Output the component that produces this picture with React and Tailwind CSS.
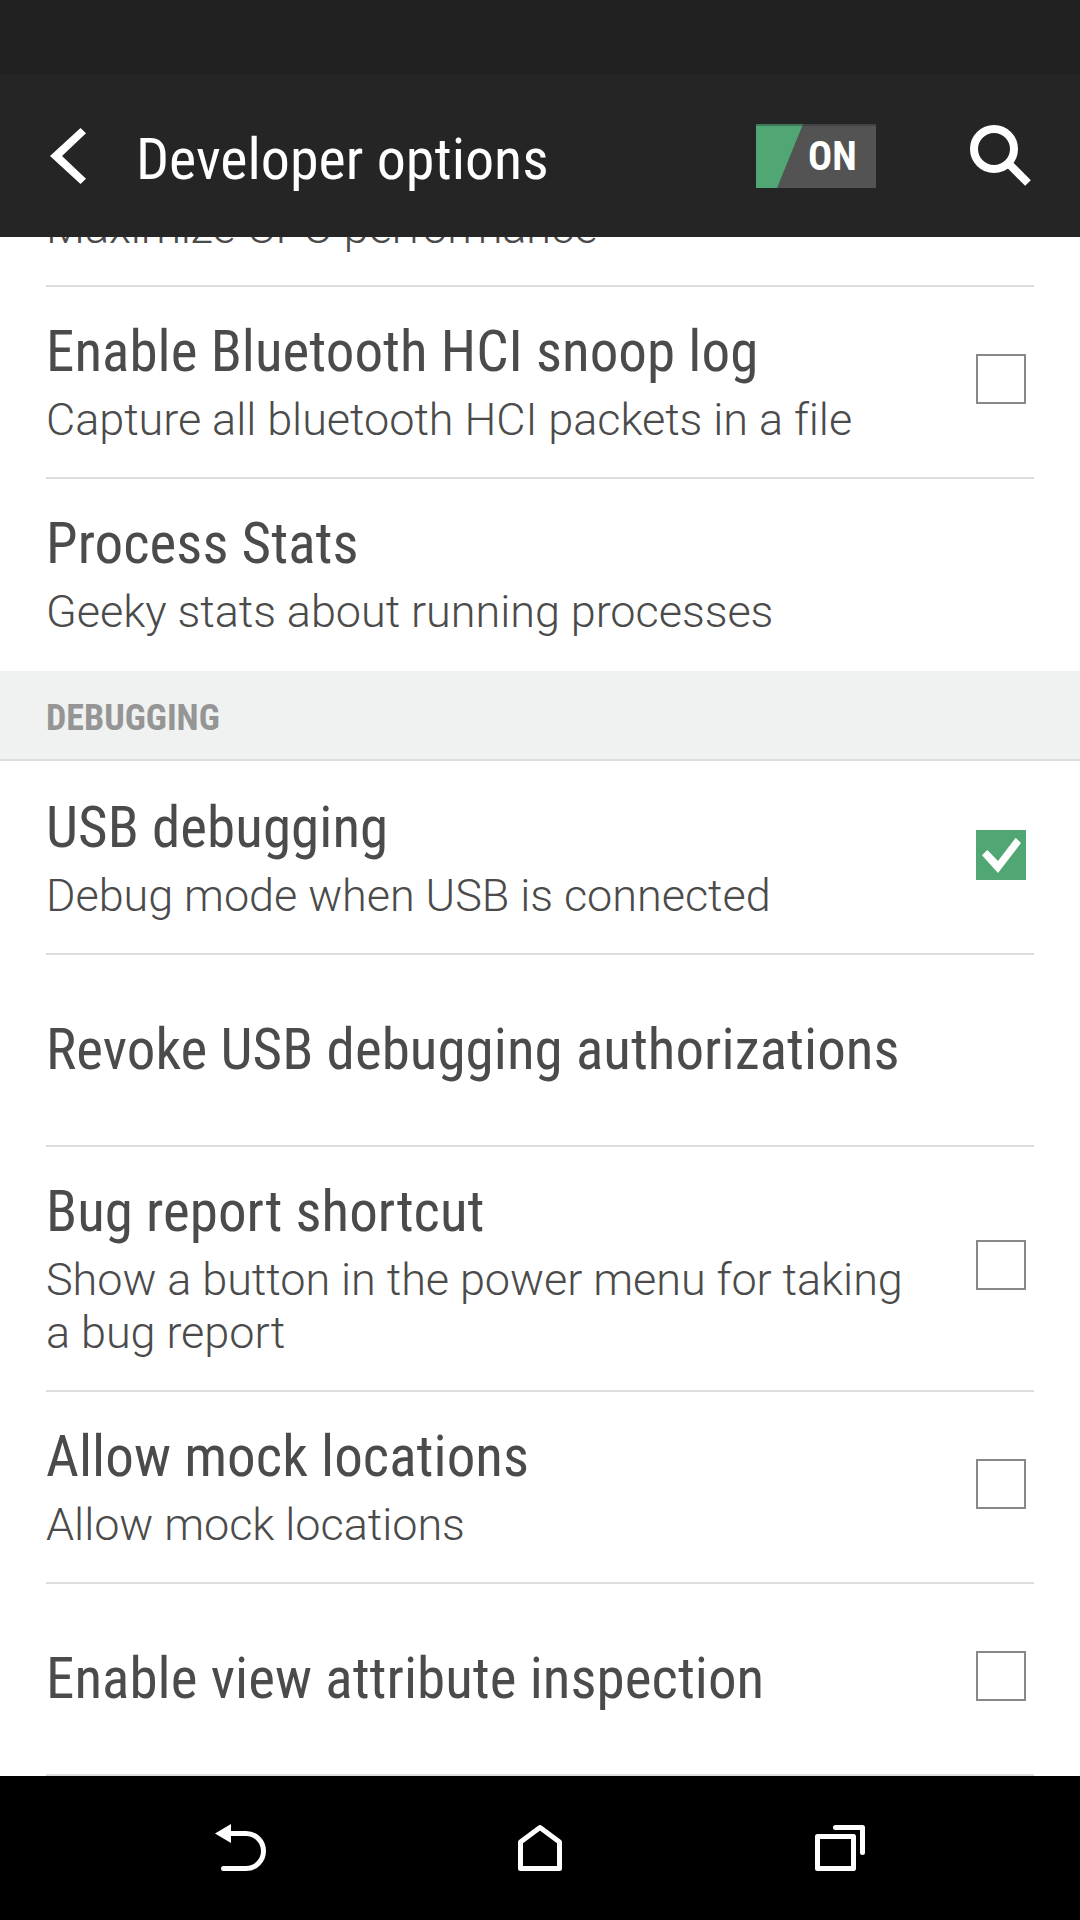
const condensed = "font-['Roboto',sans-serif] font-stretch-condensed";

function Checkbox({ checked }) {
  if (checked) {
    return (
      <svg className="mb-[7px] size-[50px] shrink-0 bg-[#50a773]" viewBox="0 0 50 50">
        <path d="M6 25.3 11.3 20 22 31 39.7 7.7 45 13 22 43Z" fill="#fff" />
      </svg>
    );
  }
  return <div className="mb-[7px] size-[50px] shrink-0 border-2 border-[#888888]" />;
}

function Row({ title, summary, checked, tall = false, divider = true }) {
  return (
    <div className="shrink-0 px-[46px]">
      <div
        className={`flex items-center justify-between border-b-2 pr-2 ${
          divider ? "border-[#dddddd]" : "border-transparent"
        } ${tall ? "h-[245px]" : "h-[192px]"}`}
      >
        <div className={`flex w-[870px] flex-col gap-2 ${summary ? "" : "pb-[1px]"}`}>
          {title && (
            <div
              className={`${condensed} whitespace-nowrap text-[57px] leading-[67px] tracking-[0.06px] text-[#4b4b4b]`}
            >
              {title}
            </div>
          )}
          {summary && (
            <div
              className={`font-['Roboto',sans-serif] text-[45px] leading-[53px] font-light tracking-[-0.05px] [font-variant-ligatures:common-ligatures] text-[#4b4b4b] ${
                title ? "" : "pt-[75px]"
              }`}
            >
              {summary}
            </div>
          )}
        </div>
        {checked !== undefined && <Checkbox checked={checked} />}
      </div>
    </div>
  );
}

function Header() {
  return (
    <header className="flex h-[162px] shrink-0 items-start bg-[#252525]">
      <svg className="mt-[53px] ml-[50px] h-[56px] w-[36px]" viewBox="0 0 36 56">
        <path d="M0 28 30.5 0 36 5.3 12 28 36 50.7 30.5 56Z" fill="#fff" />
      </svg>
      <h1 className={`${condensed} mt-[50px] ml-[50px] w-[620px] whitespace-nowrap text-[58px] leading-[68px] text-white`}>
        Developer options
      </h1>
      <div className="relative mt-[49px] flex h-[64px] w-[120px] bg-[#535353]">
        <svg className="absolute inset-0" width="120" height="64" viewBox="0 0 120 64">
          <path d="M0 0H47L21 64H0Z" fill="#50a773" />
          <path d="M0 0H120V2H0Z" fill="#252525" fillOpacity="0.35" />
        </svg>
        <span className={`${condensed} relative mt-[9px] ml-[52px] text-[40px] leading-[47px] font-bold text-white`}>
          ON
        </span>
      </div>
      <svg className="mt-[50px] ml-[94px] size-16" viewBox="0 0 64 64">
        <circle cx="24" cy="24" r="20" fill="none" stroke="#fff" strokeWidth="8" />
        <path d="M38 38 58 58" fill="none" stroke="#fff" strokeWidth="8" />
      </svg>
    </header>
  );
}

function NavBar() {
  return (
    <nav className="flex h-[144px] shrink-0 items-start bg-black pt-12">
      <svg className="ml-[215px] h-12 w-[52px]" viewBox="0 0 52 48" fill="none" stroke="#fff" strokeWidth="5">
        <path d="M0 9.5 16 0V19Z" fill="#fff" stroke="none" />
        <path d="M14 9.5H31A17.5 17.5 0 0 1 31 44.5H8.5" strokeLinecap="round" />
      </svg>
      <svg className="ml-[251px] h-12 w-[44px]" viewBox="0 0 44 48" fill="none" stroke="#fff" strokeWidth="5">
        <path d="M2.5 44.5V18L22 3.5 41.5 18V44.5Z" strokeLinejoin="round" />
      </svg>
      <svg
        className="ml-[253px] h-12 w-[51px]"
        viewBox="0 0 51 48"
        fill="none"
        stroke="#fff"
        strokeWidth="5"
        strokeLinejoin="round"
        strokeLinecap="round"
      >
        <path d="M2.5 12.5H38.5V44.5H2.5Z" />
        <path d="M20.5 3.5H47.5V28.5" />
      </svg>
    </nav>
  );
}

export default function App() {
  return (
    <div className="flex h-[1920px] w-[1080px] flex-col overflow-hidden bg-white">
      <div className="h-[75px] shrink-0 bg-[#212121]" />
      <Header />
      <main className="flex h-[1539px] shrink-0 flex-col justify-end overflow-hidden">
        <Row summary="Maximize CPU performance" />
        <Row title="Enable Bluetooth HCI snoop log" summary="Capture all bluetooth HCI packets in a file" checked={false} />
        <Row title="Process Stats" summary="Geeky stats about running processes" divider={false} />
        <h2
          className={`${condensed} mb-[2px] flex h-[90px] shrink-0 items-center border-b-2 border-[#dcdfdd] bg-[#f0f2f1] pt-[6px] pl-[46px] text-[36px] leading-[42px] font-bold text-[#959595]`}
        >
          DEBUGGING
        </h2>
        <Row title="USB debugging" summary="Debug mode when USB is connected" checked />
        <Row title="Revoke USB debugging authorizations" />
        <Row title="Bug report shortcut" summary="Show a button in the power menu for taking a bug report" checked={false} tall />
        <Row title="Allow mock locations" summary="Allow mock locations" checked={false} />
        <Row title="Enable view attribute inspection" checked={false} />
      </main>
      <NavBar />
    </div>
  );
}
